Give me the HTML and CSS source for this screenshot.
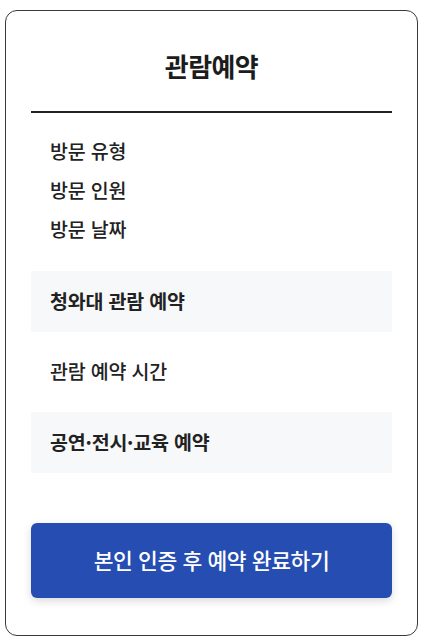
FILE: index.html
```html
<!DOCTYPE html>
<html lang="ko">
<head>
    <meta charset="UTF-8">
    <meta name="viewport" content="width=device-width, initial-scale=1.0">
    <title>관람예약</title>
    <link rel="stylesheet" href="styles.css">
</head>
<body>
    <div class="card">
        <h1 class="card-title">관람예약</h1>

        <ul class="visit-info">
            <li>방문 유형</li>
            <li>방문 인원</li>
            <li>방문 날짜</li>
        </ul>

        <div class="section section-box">청와대 관람 예약</div>
        <div class="section">관람 예약 시간</div>
        <div class="section section-box">공연·전시·교육 예약</div>

        <button class="btn-submit" type="button">본인 인증 후 예약 완료하기</button>
    </div>
</body>
</html>
```

FILE: styles.css
```css
body {
    margin: 10px 5px;
    font-family: "Noto Sans CJK KR", "Noto Sans", sans-serif;
    color: #222;
    background-color: #fff;
}
.card {
    border: 1px solid #3a3a3a;
    border-radius: 12px;
    padding: 37px 25px 37px;
}
.card-title {
    margin: 0;
    padding-bottom: 27px;
    border-bottom: 2px solid #222;
    text-align: center;
    font-size: 26px;
    line-height: 36px;
    font-weight: 700;
    letter-spacing: -0.6px;
    color: #1c1c1c;
}
.visit-info {
    list-style: none;
    margin: 0;
    padding: 18px 19px 23px;
}
.visit-info li {
    font-size: 19.5px;
    line-height: 39px;
    font-weight: 500;
    letter-spacing: -0.2px;
}
.section {
    box-sizing: border-box;
    display: flex;
    align-items: center;
    height: 80px;
    padding: 0 19px 3px;
    font-size: 19.5px;
    font-weight: 500;
    letter-spacing: -0.2px;
}
.section-box {
    height: 61px;
    padding-bottom: 2px;
    background-color: #f7f8fa;
    font-weight: 700;
}
.btn-submit {
    box-sizing: border-box;
    display: block;
    width: 100%;
    height: 75px;
    margin-top: 50px;
    padding-bottom: 3px;
    border: none;
    border-radius: 6px;
    background-color: #264db2;
    color: #fff;
    font-family: inherit;
    font-size: 21.5px;
    font-weight: 500;
    letter-spacing: -0.4px;
    box-shadow: 0 3px 8px rgba(0, 0, 0, 0.15);
    cursor: pointer;
}
```
